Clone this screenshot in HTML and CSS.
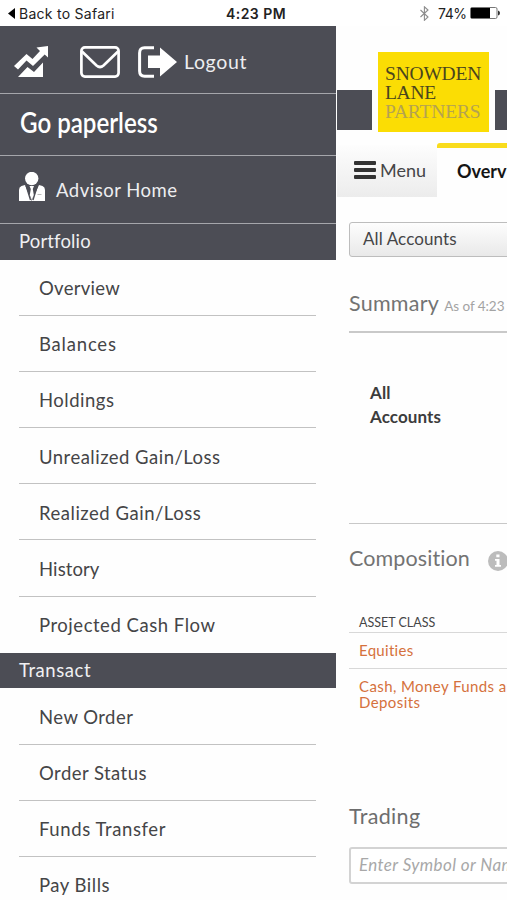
FILE: index.html
```html
<!DOCTYPE html>
<html lang="en">
<head>
<meta charset="utf-8">
<title>Portfolio</title>
<link rel="stylesheet" href="styles.css">
</head>
<body>
<div class="status">
  <div class="back"><svg width="7" height="11" viewBox="0 0 7 11"><path d="M7 0v11L0 5.500z"/></svg><span class="t-back">Back to Safari</span></div>
  <div class="clock">4:23 PM</div>
  <div class="power">
    <svg width="9" height="15" viewBox="0 0 9 15" fill="none" stroke="#8c8c8c" stroke-width="1.100"><path d="M.5 4l7.500 7-3.600 3.300V.8L8 4 .5 11"/></svg>
    <span class="pct">74%</span>
    <svg width="30" height="12" viewBox="0 0 30 12"><rect x=".5" y=".5" width="26.500" height="11" rx="1.500" fill="#fff" stroke="#777"/><path d="M1 1h19v10H1z"/><path d="M28 3.500q2 .5 2 2.500t-2 2.500z" fill="#333"/></svg>
  </div>
</div>
<div class="shell">
  <aside class="side">
    <div class="tools">
      <svg class="chart" width="35" height="32" viewBox="0 0 35 32" fill="#fff"><path d="M0 20L12.500 8l6 5L26 5l-3.500-3.500L34 0v11.500l-3.300-3L19 20l-6.500-5.500L4 23.500z"/><path d="M4 31l9.500-10 6.500 5 9-9.500V31z"/></svg>
      <svg class="mail" width="40" height="32" viewBox="0 0 40 32" fill="none" stroke="#fff" stroke-width="2.700"><rect x="1.400" y="1.400" width="37.200" height="29.200" rx="3.500"/><path d="M2 5.500l14.500 14q3.500 3 7 0L38 5.500"/></svg>
      <svg class="exit" width="39" height="32" viewBox="0 0 39 32"><path d="M16 1.700H6.500Q1.600 1.700 1.600 7v18q0 5.300 5 5.300H16" fill="none" stroke="#fff" stroke-width="3"/><path d="M10 9.500h12V1.500L39 16 22 30.500v-8.500H10z" fill="#fff"/></svg>
      <span class="t-logout">Logout</span>
    </div>
    <div class="paperless"><span class="t-paper">Go paperless</span></div>
    <div class="advisor">
      <svg width="26" height="30" viewBox="0 0 26 30"><circle cx="12.700" cy="6.500" r="6.700" fill="#fff"/><path d="M6 13L12.700 29 20 13l3.500 1q2.500 1 2.500 4v11H0V18q0-3 2.500-4z" fill="#fff"/><path d="M7 13.500L11.500 28M18.500 13.500L14 28" fill="none" stroke="#4c4d55" stroke-width="1.300"/><path d="M10.500 14h4.500l-1.200 3 1 6-2 5-2-5 1-6z" fill="#fff"/><path d="M18.500 22.500h4" stroke="#bbb"/></svg>
      <span class="t-advisor">Advisor Home</span>
    </div>
    <h2 class="sec sec1"><span class="t-portfolio">Portfolio</span></h2>
    <ul class="list">
      <li><span class="m1">Overview</span></li>
      <li><span class="m2">Balances</span></li>
      <li><span class="m3">Holdings</span></li>
      <li><span class="m4">Unrealized Gain/Loss</span></li>
      <li><span class="m5">Realized Gain/Loss</span></li>
      <li><span class="m6">History</span></li>
      <li><span class="m7">Projected Cash Flow</span></li>
    </ul>
    <h2 class="sec sec2"><span class="t-transact">Transact</span></h2>
    <ul class="list">
      <li><span class="m8">New Order</span></li>
      <li><span class="m9">Order Status</span></li>
      <li><span class="m10">Funds Transfer</span></li>
      <li><span class="m11">Pay Bills</span></li>
    </ul>
  </aside>
  <main class="main">
    <div class="brand">
      <i class="blk left"></i>
      <div class="logo"><span class="l1">SNOWDEN</span><span class="l2">LANE</span><span class="l3">PARTNERS</span></div>
      <i class="blk right"></i>
    </div>
    <nav class="tabs">
      <div class="menu"><span class="bars"><i></i><i></i><i></i></span><span class="t-menu">Menu</span></div>
      <div class="tab"><span class="t-over">Overview</span></div>
    </nav>
    <div class="content">
      <div class="select"><span class="t-select">All Accounts</span></div>
      <div class="summary"><span class="t-summary">Summary</span><span class="t-asof">As of 4:23 PM</span></div>
      <div class="accounts"><span class="a1">All</span><span class="a2">Accounts</span></div>
      <div class="comp"><span class="t-comp">Composition</span><svg width="20" height="20" viewBox="0 0 20 20"><circle cx="10" cy="10" r="10" fill="#bcbcbc"/><path d="M8.300 3.500h3.200v2.700H8.300zM7 8h4.500v6H13v1.800H7V14h1.500V9.800H7z" fill="#fff"/></svg></div>
      <div class="th"><span class="t-asset">ASSET CLASS</span></div>
      <div class="tr"><span class="t-eq">Equities</span></div>
      <div class="tr2"><span class="t-cash">Cash, Money Funds and</span><span class="t-dep">Deposits</span></div>
      <div class="trading"><span class="t-trading">Trading</span></div>
      <div class="input"><span class="t-enter">Enter Symbol or Name</span></div>
    </div>
  </main>
</div>
</body>
</html>
```

FILE: styles.css
```css
* { box-sizing: border-box; }
body { margin: 0; width: 507px; height: 900px; overflow: hidden; background: #fefefe; font-family: Lato, "Liberation Sans", sans-serif; font-variant-ligatures: none; color: #454547; }
span { white-space: nowrap; }
svg { flex: none; display: block; }
h2, ul { margin: 0; padding: 0; font-weight: 400; list-style: none; }

.status { height: 26px; display: grid; grid-template-columns: 226px 194px 1fr; align-items: center; font-family: Inter, sans-serif; color: #222; background: #fff; }
.back { display: flex; align-items: center; gap: 4px; padding-left: 8px; font-size: 14px; }
.t-back { letter-spacing: .27px; }
.clock { font-size: 14px; font-weight: 600; letter-spacing: .45px; }
.power { display: flex; align-items: center; font-size: 14px; }
.pct { width: 32px; margin-left: 9px; letter-spacing: -.4px; }

.shell { display: flex; height: 874px; }
.side { width: 336px; flex: none; }
.tools, .paperless, .advisor { background: #4c4d55; color: #eeeef0; border-bottom: 1.500px solid #a5a6ab; display: flex; align-items: center; }
.tools { height: 68px; padding: 4px 0 0 14px; font-size: 19.500px; }
.t-logout { letter-spacing: .65px; }
.chart { margin-right: 31px; }
.mail { margin-right: 18px; }
.exit { margin-right: 7px; }
.paperless { height: 62px; padding: 0 0 6px 20px; }
.t-paper { font-size: 28px; font-weight: 600; color: #fff; transform: scaleX(.86); transform-origin: left; }
.advisor { height: 68px; padding-left: 19px; font-size: 18.500px; gap: 11px; }
.advisor svg { margin-bottom: 6px; }
.t-advisor { letter-spacing: .5px; }
.sec { display: flex; align-items: center; background: #4c4d55; color: #f0f0f2; padding: 0 0 2px 19px; font-size: 18.500px; height: 35.500px; }
.t-portfolio { letter-spacing: .15px; }
.t-transact { letter-spacing: .55px; }
.list li { height: 56.200px; margin: 0 20px 0 19px; padding: 2px 0 0 20px; border-bottom: 1.500px solid #c2c2c2; display: flex; align-items: center; font-size: 18.500px; }
.list li:last-child { border-bottom-color: transparent; }
.m1 { letter-spacing: .3px; }
.m2 { letter-spacing: .8px; }
.m3 { letter-spacing: .5px; }
.m4 { letter-spacing: .48px; }
.m5 { letter-spacing: .52px; }
.m6 { letter-spacing: .1px; }
.m7 { letter-spacing: .53px; }
.m8 { letter-spacing: .45px; }
.m9 { letter-spacing: .45px; }
.m10 { letter-spacing: .6px; }
.m11 { letter-spacing: .5px; }

.main { flex: 1; min-width: 0; overflow: hidden; padding-left: 1px; }
.brand { height: 117px; display: flex; align-items: flex-start; }
.blk { background: #4c4d55; height: 40px; margin-top: 64px; flex: none; }
.left { width: 35px; }
.right { width: 14px; }
.logo { width: 111px; height: 80px; flex: none; margin: 26px 6px 0; padding: 12px 0 0 7px; background: #fbdd04; font: 19.500px/19px "Liberation Serif", serif; color: #4a451e; display: flex; flex-direction: column; align-items: flex-start; }
.l1 { letter-spacing: -.2px; }
.l2 { letter-spacing: -.3px; }
.l3 { color: #b5a350; letter-spacing: -.15px; }
.tabs { height: 54px; display: flex; }
.menu { width: 100px; flex: none; margin-top: 2px; height: 52px; padding: 0 0 2px 17px; display: flex; align-items: center; gap: 4px; background: linear-gradient(#fdfdfd, #ececec); font-size: 18px; }
.bars { display: flex; flex-direction: column; gap: 3px; }
.bars i { display: block; width: 22px; height: 4px; background: #333; border-radius: 1px; }
.tab { flex: none; width: 120px; border-top: 5px solid #f9dc1c; border-radius: 3px 0 0 0; padding: 12px 0 0 20px; font-size: 18px; font-weight: 700; color: #151515; }
.content { padding-left: 12px; width: 220px; }
.select { height: 35px; margin-top: 25px; border: 1.500px solid #bdbdbd; border-radius: 3px; padding: 0 0 3px 13px; display: flex; align-items: center; background: linear-gradient(#fdfdfd, #e9e9e9); font-size: 17px; }
.t-select { letter-spacing: .1px; }
.summary { height: 76px; padding-top: 18px; border-bottom: 2px solid #c9c9c9; display: flex; align-items: center; gap: 5px; color: #737373; }
.t-summary { font-size: 21.500px; letter-spacing: .25px; }
.t-asof { font-size: 13.500px; letter-spacing: -.05px; color: #a3a3a3; padding-top: 5px; }
.accounts { height: 191px; padding: 47.500px 0 0 21px; border-bottom: 1px solid #c8c8c8; display: flex; flex-direction: column; align-items: flex-start; font-size: 17px; font-weight: 700; line-height: 24.500px; letter-spacing: .1px; color: #3c3c3c; }
.comp { height: 69px; padding-bottom: 2px; display: flex; align-items: center; gap: 18px; font-size: 21.500px; color: #737373; }
.comp svg { margin-top: 7px; }
.t-comp { letter-spacing: .1px; }
.th { height: 40px; padding: 19px 0 0 10px; border-bottom: 1px solid #d8d8d8; font-size: 12.500px; display: flex; align-items: center; }
.tr { height: 36px; padding: 0 0 2px 10px; border-bottom: 1px solid #d8d8d8; display: flex; align-items: center; font-size: 15px; letter-spacing: .3px; color: #d5713c; }
.tr2 { height: 118px; padding: 9px 0 0 10px; display: flex; flex-direction: column; align-items: flex-start; font-size: 15px; line-height: 16px; letter-spacing: .4px; color: #d5713c; }
.trading { height: 60px; padding-bottom: 2px; display: flex; align-items: center; font-size: 21.500px; letter-spacing: .35px; color: #6d6d6d; }
.input { height: 37px; border: 2px solid #d3d3d3; border-radius: 3px; padding: 0 0 2px 8px; display: flex; align-items: center; font-size: 17px; font-style: italic; letter-spacing: .4px; color: #a8a8a8; background: #fff; }
```
